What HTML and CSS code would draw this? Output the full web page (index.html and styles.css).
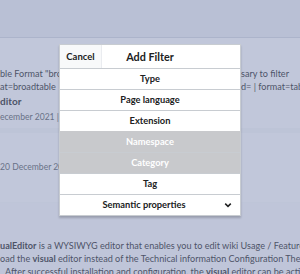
FILE: index.html
```html
<!DOCTYPE html>
<html lang="en">

<head>
    <meta charset="UTF-8">
    <meta name="viewport" content="width=device-width, initial-scale=1.0">
    <title>Add Filter</title>
    <link rel="stylesheet" href="styles.css">
</head>

<body>
    <!--the wiki page that sits behind the dialog-->
    <div class="page">
        <div class="topbar"></div>

        <div class="result">
            <div class="line split">
                <span class="left">ble Format "broadtable"</span>
                <span class="right">sary to filter</span>
            </div>
            <div class="line split">
                <span class="left">at=broadtable</span>
                <span class="right">d= | format=table</span>
            </div>
            <div class="line title">ditor</div>
            <div class="line meta">ecember 2021 | Category</div>
        </div>

        <div class="result second">
            <div class="line meta">20 December 2021</div>
        </div>

        <div class="result third">
            <div class="line"><b>ualEditor</b> is a WYSIWYG editor that enables you to edit wiki Usage / Features</div>
            <div class="line">oad the <b>visual</b> editor instead of the Technical information Configuration The</div>
            <div class="line indent">After successful installation and configuration, the <b>visual</b> editor can be activated</div>
        </div>
    </div>

    <div class="overlay"></div>

    <!--filter dialog-->
    <div class="dialog">
        <div class="dialog-head">
            <button class="cancel">Cancel</button>
            <span class="dialog-title">Add Filter</span>
            <span></span>
        </div>
        <div class="option">Type</div>
        <div class="option">Page language</div>
        <div class="option">Extension</div>
        <div class="option disabled">Namespace</div>
        <div class="option disabled">Category</div>
        <div class="option">Tag</div>
        <div class="option more">
            <span>Semantic properties</span>
            <svg width="10" height="10" viewBox="0 0 10 10">
                <path d="M2.2 3.6 L5 6.4 L7.8 3.6" fill="none" stroke="#202122" stroke-width="1.5" />
            </svg>
        </div>
    </div>
</body>

</html>
```

FILE: styles.css
```css
html,
body {
    margin: 0;
    padding: 0;
    font-family: Lato, "Open Sans", sans-serif;
}

body {
    width: 300px;
    height: 274px;
    overflow: hidden;
    position: relative;
    background: #fff;
}

.page {
    color: #202122;
    font-size: 9.1px;
    height: 274px;
    overflow: hidden;
}

.topbar {
    height: 37px;
    background: #f0f2f5;
    border-bottom: 1px solid #d6dae2;
}

.result {
    padding-top: 29px;
    padding-bottom: 4px;
    border-bottom: 5px solid #f8f9fa;
}

.result.second {
    padding-top: 26px;
    height: 43px;
    padding-bottom: 0;
    border-bottom: 1px solid #fafbfc;
}

.result.third {
    padding-top: 36px;
    border-bottom: 0;
    background: #fcfcfd;
}

.line {
    white-space: nowrap;
    height: 13px;
    line-height: 13px;
    overflow: hidden;
}

.split {
    display: flex;
}

.split .left {
    width: 59px;
    overflow: hidden;
    flex-shrink: 0;
}

.split .right {
    margin-left: 182px;
}

.title {
    font-weight: bold;
    font-size: 10px;
    margin-top: 1px;
    height: 15px;
    line-height: 15px;
}

.meta {
    font-size: 8.6px;
    color: #54595d;
    margin-top: 2px;
}

.indent {
    padding-left: 5px;
}

.overlay {
    position: absolute;
    inset: 0;
    background: rgba(126, 138, 178, 0.48);
}

.dialog {
    position: absolute;
    left: 59px;
    top: 44px;
    width: 180px;
    background: #fff;
    border: 1px solid #c8ccd1;
    box-shadow: 0 2px 2px rgba(0, 0, 0, 0.2);
}

.dialog-head {
    display: grid;
    grid-template-columns: 42px 1fr 42px;
    height: 23px;
    align-items: stretch;
}

.cancel {
    border: 0;
    border-right: 1px solid #eaecf0;
    background: #f8f9fa;
    font-family: inherit;
    font-weight: bold;
    font-size: 9.5px;
    color: #202122;
    padding: 0;
}

.dialog-title {
    text-align: center;
    font-weight: bold;
    font-size: 10.8px;
    line-height: 23px;
    color: #202122;
}

.option {
    height: 20px;
    line-height: 20px;
    border-top: 1px solid #c8ccd1;
    text-align: center;
    font-weight: bold;
    font-size: 9.3px;
    color: #202122;
    background: #fff;
}

.option.disabled {
    background: #c8c9cc;
    color: #fff;
    border-top-color: #c8c9cc;
}

.option.disabled + .option {
    border-top-color: #c8ccd1;
}

.more {
    display: grid;
    grid-template-columns: 1fr 24px;
    align-items: center;
    padding-left: 12px;
}

.more svg {
    justify-self: center;
}
```
